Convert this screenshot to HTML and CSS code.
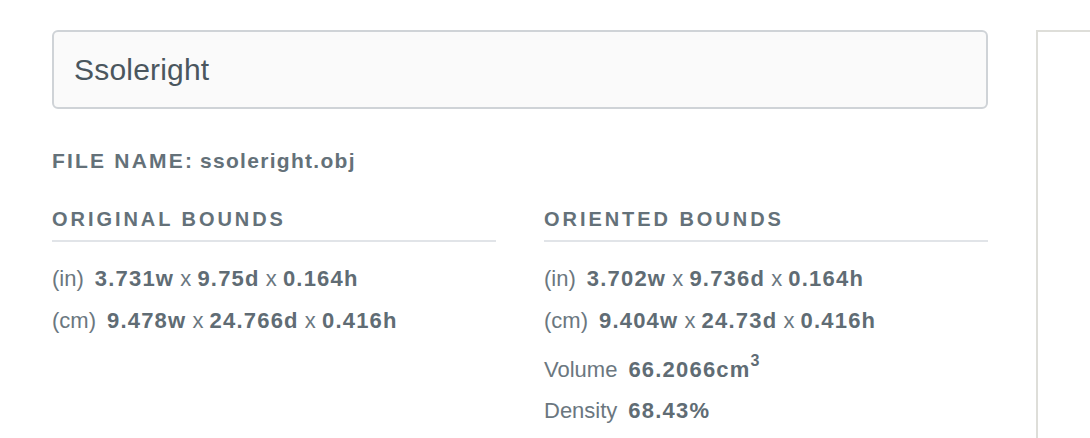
FILE: index.html
```html
<!DOCTYPE html>
<html>
<head>
<meta charset="utf-8">
<link rel="stylesheet" href="styles.css">
</head>
<body>
<div class="page">
  <main class="main">
    <div class="name-input">Ssoleright</div>
    <div class="filename"><span class="fn-label">FILE NAME:</span> <span class="fn-value">ssoleright.obj</span></div>
    <div class="columns">
      <section class="col">
        <h2 class="heading">Original Bounds</h2>
        <div class="row"><span class="lbl">(in)</span><b>3.731w</b> x <b>9.75d</b> x <b>0.164h</b></div>
        <div class="row"><span class="lbl">(cm)</span><b>9.478w</b> x <b>24.766d</b> x <b>0.416h</b></div>
      </section>
      <section class="col">
        <h2 class="heading">Oriented Bounds</h2>
        <div class="row"><span class="lbl">(in)</span><b>3.702w</b> x <b>9.736d</b> x <b>0.164h</b></div>
        <div class="row"><span class="lbl">(cm)</span><b>9.404w</b> x <b>24.73d</b> x <b>0.416h</b></div>
        <div class="row row-gap"><span class="lbl">Volume</span><b>66.2066cm<sup>3</sup></b></div>
        <div class="row"><span class="lbl">Density</span><b>68.43%</b></div>
      </section>
    </div>
  </main>
  <aside class="side"></aside>
</div>
</body>
</html>
```

FILE: styles.css
```css
html, body {
  margin: 0;
  padding: 0;
  background: #ffffff;
}
body {
  font-family: "Liberation Sans", Arial, sans-serif;
  color: #65727a;
  height: 438px;
  overflow: hidden;
}
.page {
  display: flex;
  gap: 48px;
  padding: 30px 0 0 52px;
  height: 408px;
}
.main {
  width: 936px;
  flex: none;
}
.side {
  flex: 1;
  border-left: 2px solid #deded9;
  border-top: 2px solid #deded9;
}
.name-input {
  box-sizing: border-box;
  height: 79px;
  border: 2px solid #cfd3d7;
  border-radius: 6px;
  background: #fafafa;
  padding: 0 20px;
  display: flex;
  align-items: center;
  font-size: 30px;
  letter-spacing: 0.2px;
  color: #4a565e;
}
.filename {
  margin-top: 40px;
  font-size: 21px;
  line-height: 24px;
  font-weight: bold;
  color: #647179;
}
.fn-label {
  letter-spacing: 2.2px;
}
.fn-value {
  letter-spacing: 1.3px;
}
.columns {
  display: grid;
  grid-template-columns: 1fr 1fr;
  column-gap: 48px;
  margin-top: 34px;
}
.heading {
  margin: 0;
  font-size: 20px;
  line-height: 24px;
  font-weight: bold;
  text-transform: uppercase;
  letter-spacing: 2.95px;
  color: #647179;
  padding-bottom: 9px;
  border-bottom: 2px solid #e1e4e8;
}
.row {
  height: 42px;
  line-height: 42px;
  font-size: 22px;
  color: #6b777f;
  white-space: nowrap;
}
.col .heading + .row {
  margin-top: 16px;
}
.row-gap {
  margin-top: 7px;
  height: 41px;
  line-height: 41px;
}
.row b {
  font-weight: bold;
  color: #606c74;
  letter-spacing: 1.2px;
}
.lbl {
  margin-right: 11px;
}
.row sup {
  font-size: 16px;
  line-height: 0;
  position: relative;
  top: -3px;
  letter-spacing: 0;
}
```
